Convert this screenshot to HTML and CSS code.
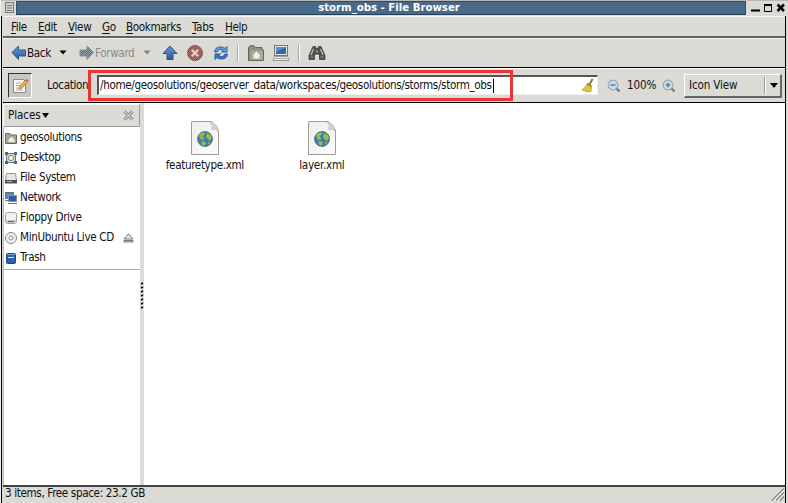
FILE: index.html
```html
<!DOCTYPE html>
<html lang="en">
<head>
<meta charset="utf-8">
<title>storm_obs - File Browser</title>
<link rel="stylesheet" href="styles.css">
</head>
<body>
<svg width="0" height="0" class="defs">
  <defs>
    <linearGradient id="blue" x1="0" y1="0" x2="0" y2="1"><stop offset="0" stop-color="#6f9bcb"/><stop offset="1" stop-color="#275a9b"/></linearGradient>
    <linearGradient id="paper" x1="0" y1="0" x2="1" y2="1"><stop offset="0" stop-color="#eeeeec"/><stop offset="1" stop-color="#fbfbfa"/></linearGradient>
    <pattern id="dither" width="2" height="2" patternUnits="userSpaceOnUse"><rect width="1" height="1" fill="#dddbd5" opacity=".5"/><rect x="1" y="1" width="1" height="1" fill="#dddbd5" opacity=".5"/></pattern>
    <symbol id="xmlfile" viewBox="0 0 28 34">
      <path d="M1 .5H20Q26 4 27.500 10V33.500H.5V1Z" fill="url(#paper)" stroke="#9b9d98"/>
      <path d="M19.500 1Q22 4 21 8.500Q25 7.500 27 10" fill="#fff" stroke="#aaaca7" stroke-width=".8"/>
      <path d="M21 8.500Q24.500 7.500 27 10Q25.500 5 21.500 2.500Z" fill="#cfd0cc"/>
      <circle cx="14" cy="18" r="7.500" fill="#4a78b5" stroke="#47648c" stroke-width=".8"/>
      <path d="M8 14Q10 11 14 11.500L13.500 14L11.500 15L13 17L12 19.500L9.500 18ZM16 12L19.500 14L20.800 17.500L18.500 20L16.500 17.500L15 16ZM10.500 20.500L13.500 20.500L15 22L13 25L11 23.500ZM17 21.500L19.500 21L17.500 23.800Z" fill="#95c23c"/>
    </symbol>
  </defs>
</svg>
<div class="window">
  <header class="titlebar">
    <svg class="winicon" width="14" height="15"><rect x="3.500" y="1.500" width="8" height="10" fill="#d0d0cb" stroke="#777"/><path d="M5 4.500h5M5 7h5M5 9.500h5" stroke="#777"/></svg>
    <h1 class="title"><span>storm_obs - File Browser</span></h1>
    <svg class="winbtns" width="42" height="16"><path d="M5 9.500h9" stroke="#000" stroke-width="2"/><path d="M18.500 4v6.500h7V4" fill="none" stroke="#000"/><path d="M18 4h8" stroke="#000" stroke-width="2"/><path d="M31.500 3.500l6.500 6.500M38 3.500l-6.500 6.500" stroke="#000" stroke-width="2.500"/></svg>
  </header>
  <div class="frame">
    <nav class="menubar">
      <span class="m-file"><u>F</u>ile</span><span class="m-edit"><u>E</u>dit</span><span class="m-view"><u>V</u>iew</span><span class="m-go"><u>G</u>o</span><span class="m-book"><u>B</u>ookmarks</span><span class="m-tabs"><u>T</u>abs</span><span class="m-help"><u>H</u>elp</span>
    </nav>
    <div class="toolbar">
      <svg class="ic back" width="16" height="16"><path d="M1 7.500L7.500 1V5H14.500V11H7.500V14.500Z" fill="url(#blue)" stroke="#28568f"/></svg>
      <span class="t-back">Back</span>
      <svg class="ic" width="8" height="16"><path d="M.5 5.500H7.500L4 9.500Z" fill="#000"/></svg>
      <svg class="ic fwd" width="16" height="16"><path d="M14.500 7.500L8 1V5H1V11H8V14.500Z" fill="#506b86" stroke="#64788b"/><rect width="16" height="16" fill="url(#dither)"/></svg>
      <span class="t-fwd">Forward</span>
      <svg class="ic" width="8" height="16"><path d="M.5 5.500H7.500L4 9.500Z" fill="#84847e"/></svg>
      <svg class="ic up" width="16" height="16"><path d="M8 1L15 8.500H11V14.500H5V8.500H1Z" fill="url(#blue)" stroke="#28568f"/></svg>
      <svg class="ic stop" width="18" height="18"><circle cx="9" cy="9" r="7.500" fill="#a54843" stroke="#714641"/><path d="M5.800 5.800l6.400 6.400M12.200 5.800l-6.400 6.400" stroke="#e1cec9" stroke-width="2.300"/><rect x="1" y="1" width="16" height="16" fill="url(#dither)" opacity=".55"/></svg>
      <svg class="ic reload" width="16" height="16"><path d="M1.500 7Q2 1.800 8 2Q10.500 2 12 3.500L14 1.500V7H8.500L10.300 5.200Q6 3 4 7Z" fill="#679bd4" stroke="#245799" stroke-width=".9"/><path d="M14.500 9Q14 14.200 8 14Q5.500 14 4 12.500L2 14.500V9H7.500L5.700 10.800Q10 13 12 9Z" fill="#3974b9" stroke="#245799" stroke-width=".9"/></svg>
      <i class="sep s1"></i>
      <svg class="ic home" width="16" height="16"><path d="M.5 15V2.500L2 .8H6L7.500 2.500H14V5H15.500V15.500H.5Z" fill="#8e9382" stroke="#61665a"/><path d="M2.500 5.500H15V15H2.500Z" fill="#a7ab99"/><path d="M4.500 10.500L8.500 6.500L12.500 10.500H11.500V13.500H5.500V10.500Z" fill="#f0f0e8"/></svg>
      <svg class="ic comp" width="18" height="18"><rect x="2.500" y="1.500" width="13" height="10" fill="#e8e8e5" stroke="#74766f"/><rect x="4" y="3" width="10" height="7" fill="#326ab0"/><path d="M4 3h10L4 8Z" fill="#5c8fcc"/><path d="M2.500 12.500h13l1.500 4H1Z" fill="#e6e6e2" stroke="#999a93"/><path d="M3.500 14.500h11" stroke="#aaa"/></svg>
      <i class="sep s2"></i>
      <svg class="ic find" width="18" height="18"><path d="M5 2.500h2.500l.5 2h2l.5-2H13l4 9v4h-5.500v-4L10 10H8l-1.500 1.500v4H1v-4Z" fill="#4f514e" stroke="#343634" stroke-width=".7"/><path d="M5.500 5L3 11M12.500 5l2.500 6M9 6.500v2" stroke="#b6b8b2" stroke-width="1.400"/><path d="M2 13h3.500M12.500 13H16" stroke="#909290"/></svg>
    </div>
    <div class="location">
      <div class="editbtn"><svg width="18" height="18"><path d="M2.500 2.500h10l2 2v11h-12Z" fill="#fafafa" stroke="#8c8d88"/><path d="M5 6h5M5 8.500h4M5 11h3M5 13h7" stroke="#aaa"/><path d="M8 12l1-3L14.500 3l2.200 1.800L11 11Z" fill="#f3b52b" stroke="#aa681a" stroke-width=".7"/><path d="M14.500 3l1-1 2 1.800-.8 1Z" fill="#c85a51"/></svg></div>
      <span class="loclabel">Location:</span>
      <div class="entry"><span class="path">/home/geosolutions/geoserver_data/workspaces/geosolutions/storms/storm_obs</span><i class="caret"></i>
        <svg class="broom" width="14" height="15"><path d="M11.500 1L8.500 6.500" stroke="#9b702b" stroke-width="2"/><path d="M6.500 5L11 7.500L10.500 9L5.500 6.500Z" fill="#777b65"/><path d="M5.500 6.500L10.500 9L10 13.500H6L1 12Q4 10 5.500 6.500Z" fill="#efd03c" stroke="#af8d18" stroke-width=".7"/><path d="M7 8L4 12.500M9 9L7 13" stroke="#b99a22" stroke-width=".7"/></svg>
      </div>
      <svg class="zo" width="14" height="14"><path d="M9 9l3.500 3.500" stroke="#777973" stroke-width="2.300"/><circle cx="6" cy="6" r="4.800" fill="#c9dce9" stroke="#9ba5aa" stroke-width="1.200"/><path d="M3.500 6h5" stroke="#4e82b3" stroke-width="1.500"/></svg>
      <span class="pct">100%</span>
      <svg class="zi" width="14" height="14"><path d="M9 9l3.500 3.500" stroke="#777973" stroke-width="2.300"/><circle cx="6" cy="6" r="4.800" fill="#d4e1e9" stroke="#9ba5aa" stroke-width="1.200"/><path d="M3.500 6h5M6 3.500v5" stroke="#4e82b3" stroke-width="1.500"/></svg>
      <div class="combo"><span>Icon View</span><i class="csep"></i><svg width="8" height="5"><path d="M0 0H8L4 5Z"/></svg></div>
      <div class="highlight"></div>
    </div>
    <main class="content">
      <aside class="sidebar">
        <div class="places"><span>Places</span><svg class="ptri" width="7" height="5"><path d="M0 0H7L3.500 5Z"/></svg><svg class="pclose" width="11" height="11"><path d="M1.500 1.500l8 8M9.500 1.500l-8 8" stroke="#777" stroke-width="3"/><path d="M1.500 1.500l8 8M9.500 1.500l-8 8" stroke="#d5d4cf" stroke-width="1.200"/></svg></div>
        <ul class="list">
          <li><svg width="12" height="12"><path d="M.5 11.500V1.500H5L6 3H11.500V11.500Z" fill="#a2a692" stroke="#686d5e"/><path d="M3.500 7.500L6.500 4.800l3 2.700v2.500h-6Z" fill="#f0f1e7"/></svg><span>geosolutions</span></li>
          <li><svg width="12" height="12"><rect x="1.500" y="1.500" width="9" height="9" fill="#d9dcae" stroke="#59749c"/><path d="M0 0h3v3H0ZM9 0h3v3H9ZM0 9h3v3H0ZM9 9h3v3H9Z" fill="#416a9f"/><circle cx="6" cy="6" r="2.600" fill="#f4f4f2" stroke="#85846c"/></svg><span>Desktop</span></li>
          <li><svg width="12" height="12"><path d="M1.500 1.500h9l1 7v2H.5v-2Z" fill="#e7e7e5" stroke="#92938f"/><path d="M0 8h12v3.500H0Z" fill="#51534f"/><path d="M2 9.500h5" stroke="#aaa"/></svg><span>File System</span></li>
          <li><svg width="12" height="12"><rect x=".5" y=".5" width="8" height="6" fill="#5b86b9" stroke="#68727d"/><path d="M0 8.500h4" stroke="#777"/><rect x="3.500" y="3.500" width="8" height="6" fill="#2860a6" stroke="#84919e"/><path d="M3 11.500h9" stroke="#777"/></svg><span>Network</span></li>
          <li><svg width="12" height="12"><rect x=".5" y=".5" width="11" height="11" rx="2" fill="#f1f1ef" stroke="#a2a39d"/><path d="M1 8h10v3H1Z" fill="#c8c8c4"/><path d="M3 9.500h6" stroke="#666"/></svg><span>Floppy Drive</span></li>
          <li><svg width="12" height="12"><circle cx="6" cy="6" r="5.500" fill="#f0f0ee" stroke="#898a87"/><circle cx="6" cy="6" r="2" fill="#fff" stroke="#8a8b88"/></svg><span>MinUbuntu Live CD</span><svg class="eject" width="11" height="10"><path d="M5.500.8L10 6H1ZM1 7.500h9v1.500H1Z" fill="#e3e3e1" stroke="#666" stroke-width=".9"/></svg></li>
          <li><svg width="12" height="12"><rect x="1.500" y="1.500" width="9" height="10" rx="1" fill="#2b62a9" stroke="#1f477d"/><path d="M2 2.500h8" stroke="#76a1d3"/><path d="M3 5.500h6" stroke="#d7e4f3"/></svg><span>Trash</span></li>
        </ul>
      </aside>
      <div class="splitter"><svg width="4" height="28"><path d="M1 2l2-1M1 6l2-1M1 10l2-1M1 14l2-1M1 18l2-1M1 22l2-1M1 26l2-1" stroke="#000" stroke-width="1.500"/></svg></div>
      <section class="files">
        <figure class="feature"><svg width="28" height="34"><use href="#xmlfile"/></svg><figcaption>featuretype.xml</figcaption></figure>
        <figure class="layer"><svg width="28" height="34"><use href="#xmlfile"/></svg><figcaption>layer.xml</figcaption></figure>
      </section>
    </main>
    <footer class="status"><span>3 items, Free space: 23.2 GB</span><svg width="14" height="14"><path d="M1 13.500L13 1.500M5 13.500L13 5.500M9 13.500L13 9.500" stroke="#858580" stroke-width="1.300"/><path d="M2.500 13.500L13 3M6.500 13.500L13 7" stroke="#fff"/></svg></footer>
  </div>
</div>
</body>
</html>
```
FILE: styles.css
```css
* { box-sizing: border-box; }
body { margin: 0; width: 788px; height: 503px; overflow: hidden; background: #dbdad5; font: 11.6px/16px "DejaVu Sans Condensed", "DejaVu Sans", sans-serif; font-stretch: condensed; letter-spacing: -0.36px; color: #111; }
svg { display: block; flex: none; }
.defs { position: absolute; }
span { white-space: nowrap; flex: none; }
.window { width: 788px; height: 503px; display: flex; flex-direction: column; border-left: 1px solid #eee; }
.titlebar { height: 16px; display: flex; border-top: 1px solid #b9b8b3; }
.winicon { margin-left: 1px; }
.title { margin: 0; width: 731px; height: 14px; background: #48698a; border: 1px solid #304d69; border-bottom-color: #263e55; color: #fff; font-size: 11.3px; letter-spacing: 0; line-height: 12px; text-align: center; padding-left: 16px; }
.frame { width: 785px; height: 487px; display: flex; flex-direction: column; border-left: 1px solid #000; border-right: 1px solid #000; padding-left: 1px; }
.menubar { height: 22px; display: flex; align-items: center; border-top: 1px solid #f8f8f6; border-bottom: 2px solid #64635f; padding-left: 8px; }
.menubar u { text-underline-offset: 2px; text-decoration-thickness: 1px; }
.m-file { width: 27px; } .m-edit { width: 30px; } .m-view { width: 34px; } .m-go { width: 24px; } .m-book { width: 66px; } .m-tabs { width: 33px; }
.toolbar { height: 30px; display: flex; align-items: center; border-top: 1px solid #f4f4f1; border-bottom: 1px solid #000; padding-left: 8px; }
.toolbar span { margin-top: -1px; }
.t-back { width: 32px; } .t-fwd { width: 48px; color: #8c8c86; }
.fwd { margin-left: 12px; } .up { margin-left: 11px; } .stop { margin-left: 8px; } .reload { margin-left: 9px; }
.sep { width: 2px; height: 17px; border-left: 1px solid #aaa9a4; border-right: 1px solid #fff; }
.s1 { margin-left: 8px; } .home { margin-left: 9px; } .comp { margin-left: 8px; } .s2 { margin-left: 8px; } .find { margin-left: 8px; }
.location { position: relative; height: 35px; display: flex; align-items: center; border-top: 1px solid #fff; border-bottom: 1px solid #000; padding-left: 5px; }
.editbtn { width: 24px; height: 25px; background: #c8c7c2; border: 1px solid #333; border-right-color: #fff; border-bottom-color: #fff; display: flex; align-items: center; justify-content: center; }
.loclabel { width: 50px; margin-left: 15px; margin-top: -1px; }
.entry { width: 501px; height: 20px; margin-top: -1px; background: #fff; border: 1px solid #555; border-width: 2px 1px 1px 2px; border-right-color: #eee; border-bottom-color: #eee; display: flex; align-items: center; padding-left: 1px; }
.path { width: 393px; margin-top: -2px; }
.caret { width: 1px; height: 14px; background: #000; }
.broom { margin-left: auto; margin-right: 2px; }
.zo { margin-left: 9px; } .pct { width: 35px; margin-left: 6px; margin-top: -1px; letter-spacing: -0.15px; }
.combo { width: 98px; height: 24px; margin-left: 8px; border: 1px solid #fff; border-right: 2px solid #666; border-bottom: 2px solid #666; display: flex; align-items: center; padding-left: 4px; }
.combo span { width: 75px; letter-spacing: -0.15px; }
.csep { width: 2px; height: 17px; border-left: 1px solid #999; border-right: 1px solid #fff; margin-right: 4px; }
.highlight { position: absolute; left: 85px; top: 1px; width: 425px; height: 31px; border: 3px solid #e83535; }
.content { height: 382px; display: flex; background: #fff; }
.sidebar { width: 137px; border-left: 1px solid #bbb; }
.places { height: 23px; margin-top: 1px; margin-left: -1px; background: #dcdbd6; border: 1px solid #999; border-top-color: #f8f8f8; border-left-color: #fff; display: flex; align-items: center; padding-left: 4px; }
.places span { letter-spacing: -0.1px; margin-top: -1px; }
.ptri { margin-left: 1px; } .pclose { margin-left: auto; margin-right: 5px; }
.list { margin: 0; padding: 0 0 2px 1px; list-style: none; border-bottom: 1px solid #aaa; }
.list li { height: 20px; display: flex; align-items: center; gap: 3px; padding-top: 1px; }
.list span { margin-top: -2px; }
.eject { margin-left: auto; margin-right: 6px; }
.splitter { width: 4px; background: #dcdbd6; padding-top: 179px; }
.files { width: 642px; display: flex; padding-top: 18px; }
figure { margin: 0; display: flex; flex-direction: column; align-items: center; }
.feature { width: 82px; margin-left: 20px; } .layer { width: 48px; margin-left: 52px; }
figcaption { margin-top: 2px; white-space: nowrap; }
.layer figcaption { letter-spacing: -0.25px; }
.status { height: 18px; display: flex; border-top: 2px solid #444; padding-left: 2px; justify-content: space-between; line-height: 13px; }
```
